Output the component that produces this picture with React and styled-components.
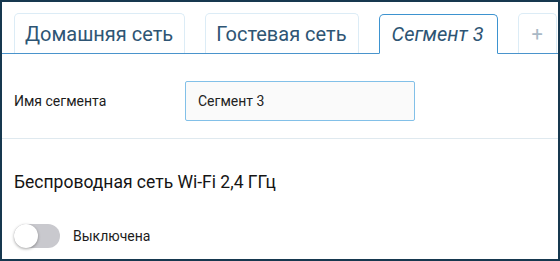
import React, { useState } from "react";
import styled, { createGlobalStyle } from "styled-components";

const Global = createGlobalStyle`
  html, body { margin: 0; padding: 0; background: #ffffff; }
  body { font-family: Roboto, "Liberation Sans", sans-serif; }
`;

const Frame = styled.div`
  box-sizing: border-box;
  width: 560px;
  height: 261px;
  border: 2px solid #16384f;
  background: #fff;
  overflow: hidden;
`;

const TabBar = styled.div`
  display: flex;
  align-items: flex-end;
  gap: 20px;
  padding: 11px 0 0 12px;
  border-bottom: 1px solid #4a94cc;
`;

const Tab = styled.div`
  box-sizing: border-box;
  height: 40px;
  padding: ${(p) => (p.$narrow ? "0 13px" : p.$active ? "0 13px 0 12px" : "0 11px 0 10px")};
  display: flex;
  align-items: center;
  border: 1px solid ${(p) => (p.$active ? "#3d93d0" : "#dcecf6")};
  border-bottom: ${(p) => (p.$active ? "1px solid #fff" : "none")};
  margin-bottom: ${(p) => (p.$active ? "-1px" : "0")};
  border-radius: 5px 5px 0 0;
  background: #fff;
  font-size: 20px;
  font-style: ${(p) => (p.$active ? "italic" : "normal")};
  color: ${(p) => (p.$muted ? "#a9b9c6" : "#2e5574")};
  cursor: pointer;
  white-space: nowrap;
`;

const FieldRow = styled.div`
  display: flex;
  align-items: center;
  padding: 27px 0 17px 12px;
  border-bottom: 1px solid #dfe9ef;
`;

const Label = styled.div`
  width: 171px;
  font-size: 14px;
  color: #1c1c1c;
`;

const Input = styled.input`
  box-sizing: border-box;
  width: 230px;
  height: 40px;
  padding: 0 12px;
  border: 1px solid #82c0e8;
  border-radius: 2px;
  background: #fafafa;
  font-family: Roboto, "Liberation Sans", sans-serif;
  font-size: 14px;
  color: #222;
  outline: none;
`;

const Section = styled.div`
  padding: 31px 0 0 12px;
`;

const Heading = styled.div`
  font-size: 17.5px;
  color: #151515;
  line-height: 24px;
`;

const SwitchRow = styled.label`
  display: flex;
  align-items: center;
  gap: 13px;
  margin-top: 30px;
  font-size: 14px;
  color: #1c1c1c;
  cursor: pointer;
`;

const Track = styled.span`
  position: relative;
  display: inline-block;
  width: 46px;
  height: 24px;
  border-radius: 12px;
  background: ${(p) => (p.$on ? "#4a94cc" : "#c9c9ce")};
`;

const Knob = styled.span`
  position: absolute;
  top: 0;
  left: ${(p) => (p.$on ? "22px" : "0")};
  width: 24px;
  height: 24px;
  border-radius: 50%;
  background: #fff;
  box-shadow: 0 1px 3px rgba(0, 0, 0, 0.35);
`;

export default function App() {
  const [name, setName] = useState("Сегмент 3");
  const [on, setOn] = useState(false);
  return (
    <>
      <Global />
      <Frame>
        <TabBar>
          <Tab>Домашняя сеть</Tab>
          <Tab>Гостевая сеть</Tab>
          <Tab $active>Сегмент 3</Tab>
          <Tab $muted $narrow>+</Tab>
        </TabBar>
        <FieldRow>
          <Label>Имя сегмента</Label>
          <Input value={name} onChange={(e) => setName(e.target.value)} />
        </FieldRow>
        <Section>
          <Heading>Беспроводная сеть Wi-Fi 2,4 ГГц</Heading>
          <SwitchRow onClick={() => setOn(!on)}>
            <Track $on={on}>
              <Knob $on={on} />
            </Track>
            {on ? "Включена" : "Выключена"}
          </SwitchRow>
        </Section>
      </Frame>
    </>
  );
}
